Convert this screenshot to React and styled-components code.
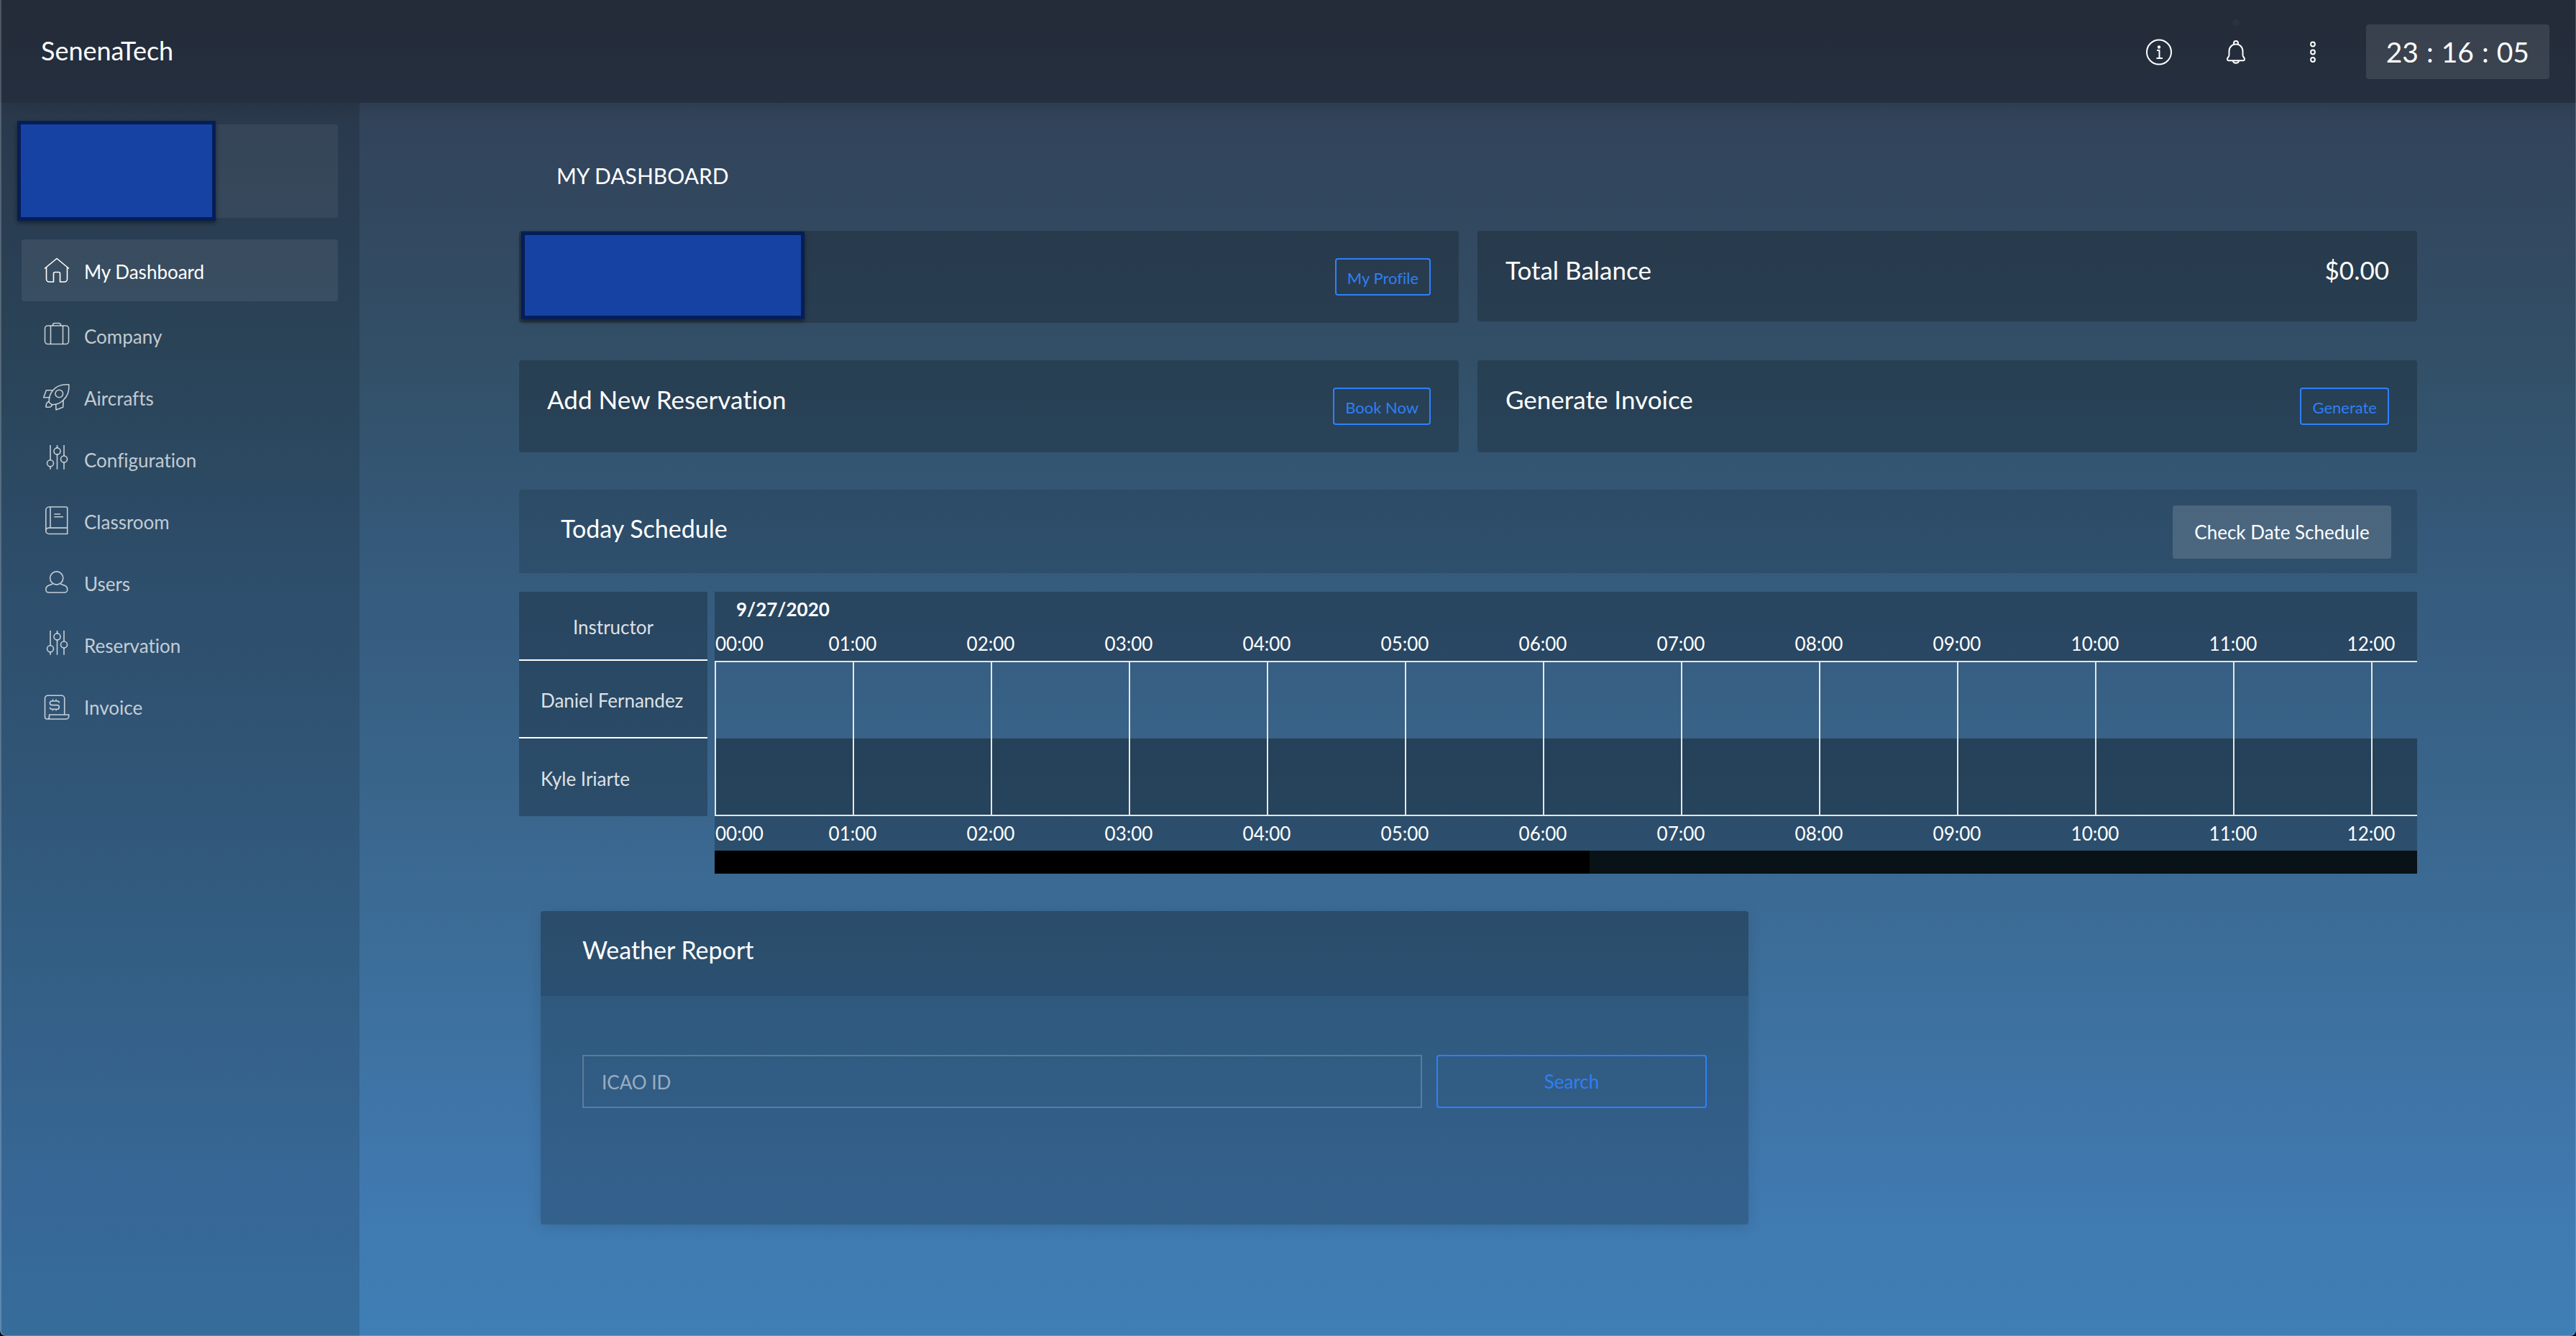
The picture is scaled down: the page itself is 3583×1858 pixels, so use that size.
import React from "react";
import styled, { createGlobalStyle } from "styled-components";

const GlobalStyle = createGlobalStyle`
  *, *::before, *::after { box-sizing: border-box; }
  body {
    margin: 0;
    color: #fff;
    font: 400 26px/40px Lato, "Open Sans", sans-serif;
    font-variant-ligatures: none;
    background: #000;
  }
  button, input { font: inherit; color: inherit; }
  h1, h2, p, ul { margin: 0; padding: 0; font-weight: 400; }
`;

const Page = styled.div`
  min-height: 100vh;
  display: flex;
  flex-direction: column;
  overflow: hidden;
  border-radius: 0 0 8px 8px;
  background: linear-gradient(
    180deg,
    #333c4e 0%,
    #32445b 10%,
    #325068 28%,
    #355a7c 42%,
    #39648a 58%,
    #3c6e9a 72%,
    #4078ae 88%,
    #3f7fb5 100%
  );

  &::after {
    content: "";
    position: fixed;
    inset: 0;
    border: solid rgba(255, 255, 255, 0.2);
    border-width: 0 1px 1px 2px;
    border-radius: 0 0 8px 8px;
    pointer-events: none;
  }
`;

const Header = styled.header`
  height: 143px;
  padding: 0 37px 0 57px;
  display: flex;
  align-items: center;
  background: rgba(0, 0, 0, 0.28);
  box-shadow: 0 4px 20px rgba(0, 0, 0, 0.12);
`;

const Brand = styled.a`
  margin-right: auto;
  padding-bottom: 4px;
  color: #fff;
  font-size: 36px;
  text-decoration: none;
`;

const HeaderButton = styled.button`
  width: 107px;
  height: 80px;
  padding: 0;
  display: flex;
  align-items: center;
  justify-content: center;
  border: 0;
  background: none;
`;

const Clock = styled.div`
  height: 76px;
  margin-left: 20px;
  padding: 0 28px;
  display: flex;
  align-items: center;
  gap: 11px;
  border-radius: 4px;
  background: rgba(255, 255, 255, 0.1);
  font-size: 39px;
`;

const Body = styled.div`
  flex: 1;
  display: flex;
`;

const Sidebar = styled.nav`
  width: 500px;
  padding: 30px;
  background: rgba(0, 0, 0, 0.14);
`;

const UserBox = styled.div`
  position: relative;
  height: 130px;
  margin-bottom: 30px;
  border-radius: 4px;
  background: rgba(255, 255, 255, 0.06);
`;

const Cover = styled.div`
  position: absolute;
  top: ${(p) => p.$top}px;
  left: ${(p) => p.$left}px;
  width: ${(p) => p.$width}px;
  height: ${(p) => p.$height}px;
  border: 5px solid #051e57;
  background: #1643a3;
  box-shadow: 0 3px 6px rgba(0, 0, 0, 0.45);
`;

const Menu = styled.ul`
  list-style: none;
`;

const MenuItem = styled.li`
  &:first-child { margin-bottom: 4px; }
`;

const MenuLink = styled.a`
  height: 86px;
  padding-left: 31px;
  display: flex;
  align-items: center;
  gap: 20px;
  border-radius: 4px;
  text-decoration: none;
  color: ${(p) => (p.$active ? "#fff" : "rgba(255, 255, 255, 0.72)")};
  background: ${(p) => (p.$active ? "rgba(255, 255, 255, 0.07)" : "none")};
`;

const MenuLabel = styled.span`
  padding-top: 3px;
`;

const IconSvg = styled.svg`
  display: block;
  flex: none;
  fill: none;
  stroke: currentColor;
  stroke-width: ${(p) => p.$stroke}px;
  stroke-linejoin: round;
  overflow: visible;
`;

const Main = styled.main`
  flex: 1;
  min-width: 0;
  padding: 81px 221px 80px 222px;
`;

const PageTitle = styled.h1`
  margin: 0 0 57px 52px;
  font-size: 30px;
  line-height: 40px;
`;

const Cards = styled.div`
  display: grid;
  grid-template-columns: 1fr 1fr;
  align-items: start;
  gap: 52px 26px;
`;

const Card = styled.section`
  position: relative;
  min-height: 126px;
  padding: 38px 39px;
  display: flex;
  justify-content: space-between;
  align-items: flex-start;
  border-radius: 4px;
  background: rgba(0, 0, 0, 0.2);
`;

const CardTitle = styled.h2`
  font-size: 35px;
  line-height: 32px;
`;

const CardValue = styled.p`
  font-size: 35px;
  line-height: 32px;
`;

const OutlineButton = styled.button`
  height: ${(p) => (p.$large ? 74 : 52)}px;
  margin-left: ${(p) => (p.$large ? 0 : "auto")};
  padding: ${(p) => (p.$large ? "0 15px" : "3px 15px 0")};
  border: 2px solid #2f80fa;
  border-radius: 4px;
  background: none;
  color: #2f7ff5;
  font-size: ${(p) => (p.$large ? 26 : 22)}px;
`;

const ScheduleBar = styled.section`
  margin-top: 52px;
  padding: 22px 36px 20px 58px;
  display: flex;
  justify-content: space-between;
  align-items: flex-start;
  border-radius: 4px 4px 0 0;
  background: rgba(0, 0, 0, 0.12);
`;

const PanelTitle = styled.h2`
  font-size: 34px;
  line-height: 64px;
`;

const SolidButton = styled.button`
  width: 304px;
  height: 74px;
  padding: 0;
  border: 0;
  border-radius: 4px;
  background: rgba(255, 255, 255, 0.14);
`;

const Schedule = styled.div`
  margin-top: 26px;
  display: flex;
  align-items: flex-start;
  gap: 10px;
`;

const Instructors = styled.table`
  width: 262px;
  border-collapse: separate;
  border-spacing: 0;
  background: rgba(0, 0, 0, 0.24);
  color: rgba(255, 255, 255, 0.85);
`;

const InstructorHead = styled.th`
  height: 96px;
  padding: 3px 0 0;
  border-bottom: 2px solid #fff;
  font-weight: 400;
`;

const InstructorCell = styled.td`
  height: 108px;
  padding: 3px 0 0 30px;
  border-bottom: ${(p) => (p.$last ? 0 : "2px solid #fff")};
`;

const Timeline = styled.div`
  flex: 1;
  min-width: 0;
  overflow: hidden;
`;

const TimeBand = styled.div`
  background: rgba(0, 0, 0, 0.24);
`;

const DateLabel = styled.p`
  padding-left: 30px;
  font-weight: 700;
  line-height: 48px;
`;

const Hours = styled.div`
  display: flex;
  line-height: 48px;
`;

const Hour = styled.span`
  flex: none;
  width: 192px;
  text-align: center;

  &:first-child {
    width: 96px;
    padding-left: 1px;
    text-align: left;
  }
`;

const Slots = styled.div`
  display: flex;
  height: 216px;
  border: solid #e8e6e3;
  border-width: 2px 0;
  background: linear-gradient(transparent 50%, rgba(0, 0, 0, 0.34) 50%);
`;

const Slot = styled.div`
  flex: none;
  width: 192px;
  border-left: 2px solid #e8e6e3;
`;

const ScrollTrack = styled.div`
  height: 32px;
  background: #091217;
`;

const ScrollThumb = styled.div`
  width: 51.4%;
  height: 100%;
  background: #000;
`;

const WeatherRow = styled.div`
  margin-top: 52px;
  padding-left: 30px;
  display: grid;
  grid-template-columns: 56fr 31fr;
`;

const WeatherCard = styled.section`
  overflow: hidden;
  border-radius: 4px;
  background: rgba(0, 0, 0, 0.2);
  box-shadow: 0 4px 20px rgba(0, 0, 0, 0.1);
`;

const WeatherHead = styled.div`
  padding: 22px 58px 32px;
  background: rgba(0, 0, 0, 0.1);
`;

const WeatherForm = styled.form`
  padding: 82px 58px 162px;
  display: grid;
  grid-template-columns: 1fr 376px;
  gap: 20px;
`;

const TextInput = styled.input`
  min-width: 0;
  height: 74px;
  padding: 2px 25px 0;
  border: 2px solid rgba(255, 255, 255, 0.2);
  border-radius: 0;
  background: none;

  &::placeholder {
    color: rgba(255, 255, 255, 0.5);
    opacity: 1;
  }
`;

const menuIcons = {
  home: (
    <path d="M1 15.5L18 1.5l17 14M3.5 13.5V30a4 4 0 0 0 4 4h6V22.5a2 2 0 0 1 2-2h5a2 2 0 0 1 2 2V34h6a4 4 0 0 0 4-4V13.5" />
  ),
  company: (
    <>
      <rect x="1.5" y="5" width="33" height="25.5" rx="4" />
      <path d="M12.5 5V4A2.5 2.5 0 0 1 15 1.5h6A2.5 2.5 0 0 1 23.5 4v1M9.5 5v25.5M26.5 5v25.5" />
    </>
  ),
  aircraft: (
    <>
      <path d="M34.8 .8C25 .2 17 3 12 9.5C8.5 14 7 19 7.2 25.5L11 28.7C17 29 22 27.5 27 22.5C33 17 35.5 9 34.8 .8Z" />
      <circle cx="21.3" cy="13.5" r="5.3" />
      <path d="M12 8.8H3.3L-.3 18.8H7.6M27 22.8L26.7 32.2L17 36L16.7 28.5M7.2 24.7C4 24.7 3 27 3 32.2H7C10 32.2 11.5 30.5 11 28.7" />
    </>
  ),
  sliders: (
    <>
      <circle cx="9" cy="24.3" r="4.5" />
      <circle cx="18.5" cy="7.4" r="4.5" />
      <circle cx="28" cy="18.5" r="4.5" />
      <path d="M9-1v20.8M9 28.8v4M18.5-1v3.9M18.5 11.9v20.9M28-1v15M28 23v9.8" />
    </>
  ),
  classroom: (
    <path d="M2.8 32.4V3.5A4.5 4.5 0 0 1 7.3-1H30.7a2 2 0 0 1 2 2V36.5H7a4.2 4.2 0 0 1 0-8.4H32.7M9-1V28.1M14.3 9H23M14.3 12.8H27" />
  ),
  users: (
    <>
      <circle cx="17.7" cy="12" r="9.1" />
      <path d="M12 20.2L6.5 22.3C4 23.4 2.8 25 2.8 28a4 4 0 0 0 4 4H28.7a4 4 0 0 0 4-4C32.7 25 31.5 23.4 29 22.3L23.4 20.2" />
    </>
  ),
  invoice: (
    <path d="M28.7 30V7.3a4 4 0 0 0-4-4H5.5a4 4 0 0 0-4 4V33a3 3 0 0 0 3 3a3 3 0 0 0 3-3V30H34.7V32a4 4 0 0 1-4 4H4.5M21.3 13.5A2.5 2.5 0 0 0 18.8 11H11.2a2.8 2.8 0 0 0 0 5.6H18.5a2.8 2.8 0 0 1 0 5.6H11a2.5 2.5 0 0 1-2.5-2.5M12.5 8.6V11M17 8.6V11M12.5 22.2V24.6M17 22.2V24.6" />
  ),
};

const menu = [
  { label: "My Dashboard", icon: "home", active: true },
  { label: "Company", icon: "company" },
  { label: "Aircrafts", icon: "aircraft" },
  { label: "Configuration", icon: "sliders" },
  { label: "Classroom", icon: "classroom" },
  { label: "Users", icon: "users" },
  { label: "Reservation", icon: "sliders" },
  { label: "Invoice", icon: "invoice" },
];

const hours = Array.from({ length: 13 }, (_, h) => `${String(h).padStart(2, "0")}:00`);

function HeaderIcon({ label, children }) {
  return (
    <HeaderButton type="button" aria-label={label}>
      <IconSvg $stroke={2} width="40" height="40" viewBox="0 0 40 40" aria-hidden="true">
        {children}
      </IconSvg>
    </HeaderButton>
  );
}

function HourRow() {
  return (
    <Hours>
      {hours.map((h) => (
        <Hour key={h}>{h}</Hour>
      ))}
    </Hours>
  );
}

export default function App() {
  return (
    <Page>
      <GlobalStyle />
      <Header>
        <Brand href="#home">SenenaTech</Brand>
        <HeaderIcon label="Information">
          <circle cx="20" cy="20.5" r="17" />
          <circle cx="20" cy="13.5" r="1.2" fill="currentColor" />
          <path d="M17 18h3.5v11M16.5 29h8.5" />
        </HeaderIcon>
        <HeaderIcon label="Notifications">
          <circle cx="20" cy="-20" r="5" fill="rgba(255,255,255,0.03)" stroke="none" />
          <path d="M10.5 19.5C10.5 13.5 14.5 9.5 20 9.5S29.5 13.5 29.5 19.5V24.5C29.5 27.5 32 27.5 32 30.5A2 2 0 0 1 30 32.3H10A2 2 0 0 1 8 30.5C8 27.5 10.5 27.5 10.5 24.5ZM17 9.8V8A3 3 0 0 1 23 8V9.8M15.500 32.3C17 37 23 37 24.5 32.3" />
        </HeaderIcon>
        <HeaderIcon label="More options">
          <circle cx="20" cy="9.5" r="2.9" />
          <circle cx="20" cy="20.5" r="2.9" />
          <circle cx="20" cy="31" r="2.9" />
        </HeaderIcon>
        <Clock>
          <span>23</span>
          <span>:</span>
          <span>16</span>
          <span>:</span>
          <span>05</span>
        </Clock>
      </Header>

      <Body>
        <Sidebar aria-label="Main">
          <UserBox>
            <Cover $top={-5} $left={-6} $width={276} $height={139} />
          </UserBox>
          <Menu>
            {menu.map((item) => (
              <MenuItem key={item.label}>
                <MenuLink href="#" $active={item.active}>
                  <IconSvg $stroke={1.6} width="36" height="36" viewBox="0 0 36 36" aria-hidden="true">
                    {menuIcons[item.icon]}
                  </IconSvg>
                  <MenuLabel>{item.label}</MenuLabel>
                </MenuLink>
              </MenuItem>
            ))}
          </Menu>
        </Sidebar>

        <Main>
          <PageTitle>MY DASHBOARD</PageTitle>

          <Cards>
            <Card>
              <Cover $top={1} $left={3} $width={394} $height={122} />
              <OutlineButton type="button">My Profile</OutlineButton>
            </Card>
            <Card>
              <CardTitle>Total Balance</CardTitle>
              <CardValue>$0.00</CardValue>
            </Card>
            <Card>
              <CardTitle>Add New Reservation</CardTitle>
              <OutlineButton type="button">Book Now</OutlineButton>
            </Card>
            <Card>
              <CardTitle>Generate Invoice</CardTitle>
              <OutlineButton type="button">Generate</OutlineButton>
            </Card>
          </Cards>

          <ScheduleBar>
            <PanelTitle>Today Schedule</PanelTitle>
            <SolidButton type="button">Check Date Schedule</SolidButton>
          </ScheduleBar>

          <Schedule>
            <Instructors>
              <thead>
                <tr>
                  <InstructorHead scope="col">Instructor</InstructorHead>
                </tr>
              </thead>
              <tbody>
                <tr>
                  <InstructorCell>Daniel Fernandez</InstructorCell>
                </tr>
                <tr>
                  <InstructorCell $last>Kyle Iriarte</InstructorCell>
                </tr>
              </tbody>
            </Instructors>

            <Timeline>
              <TimeBand>
                <DateLabel>9/27/2020</DateLabel>
                <HourRow />
              </TimeBand>
              <Slots>
                {hours.map((h) => (
                  <Slot key={h} />
                ))}
              </Slots>
              <TimeBand>
                <HourRow />
              </TimeBand>
              <ScrollTrack>
                <ScrollThumb />
              </ScrollTrack>
            </Timeline>
          </Schedule>

          <WeatherRow>
            <WeatherCard>
              <WeatherHead>
                <PanelTitle>Weather Report</PanelTitle>
              </WeatherHead>
              <WeatherForm>
                <TextInput type="text" placeholder="ICAO ID" aria-label="ICAO ID" />
                <OutlineButton type="button" $large>
                  Search
                </OutlineButton>
              </WeatherForm>
            </WeatherCard>
          </WeatherRow>
        </Main>
      </Body>
    </Page>
  );
}
